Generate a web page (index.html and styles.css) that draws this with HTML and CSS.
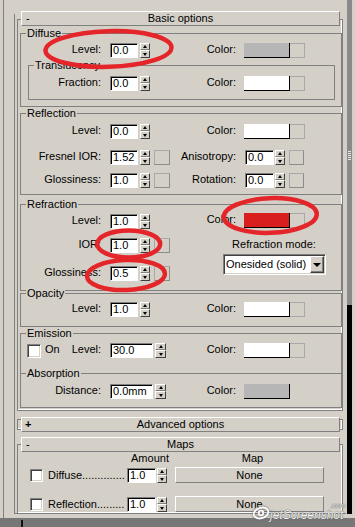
FILE: index.html
```html
<!DOCTYPE html>
<html lang="en">
<head>
<meta charset="utf-8">
<title>Material options</title>
<link rel="stylesheet" href="styles.css">
</head>
<body>
<div class="screen">
  <div class="main">
    <div class="edge"></div>
    <div class="pane">
      <section class="rollout basic">
        <div class="rhead"><span class="sign">-</span><span class="rtitle">Basic options</span></div>
        <div class="rbody">
          <div class="group diffuse">
            <div class="gtitle">Diffuse</div>
            <div class="row mt3">
              <div class="lcell"><span class="lbl">Level:</span><span class="num">0.0</span><span class="spin"><i></i><i></i></span></div>
              <div class="rcell"><span class="rlbl">Color:</span><span class="swatch s-gray"></span><span class="cbtn"></span></div>
            </div>
            <div class="group sub">
              <div class="gtitle">Translucency</div>
              <div class="row mt4">
                <div class="lcell"><span class="lbl">Fraction:</span><span class="num">0.0</span><span class="spin"><i></i><i></i></span></div>
                <div class="rcell"><span class="rlbl">Color:</span><span class="swatch s-white"></span><span class="cbtn"></span></div>
              </div>
            </div>
          </div>

          <div class="group reflection">
            <div class="gtitle">Reflection</div>
            <div class="row mt4">
              <div class="lcell"><span class="lbl">Level:</span><span class="num">0.0</span><span class="spin"><i></i><i></i></span></div>
              <div class="rcell"><span class="rlbl">Color:</span><span class="swatch s-white"></span><span class="cbtn"></span></div>
            </div>
            <div class="row mt11">
              <div class="lcell"><span class="lbl">Fresnel IOR:</span><span class="num">1.52</span><span class="spin"><i></i><i></i></span><span class="mbtn"></span></div>
              <div class="rcell"><span class="rlbl">Anisotropy:</span><span class="num">0.0</span><span class="spin"><i></i><i></i></span><span class="mbtn"></span></div>
            </div>
            <div class="row mt8">
              <div class="lcell"><span class="lbl">Glossiness:</span><span class="num">1.0</span><span class="spin"><i></i><i></i></span><span class="mbtn"></span></div>
              <div class="rcell"><span class="rlbl">Rotation:</span><span class="num">0.0</span><span class="spin"><i></i><i></i></span><span class="mbtn"></span></div>
            </div>
          </div>

          <div class="group refraction">
            <div class="gtitle">Refraction</div>
            <div class="cols">
              <div class="lcol">
                <div class="row mt3">
                  <div class="lcell"><span class="lbl">Level:</span><span class="num">1.0</span><span class="spin"><i></i><i></i></span></div>
                </div>
                <div class="row mt9">
                  <div class="lcell"><span class="lbl">IOR:</span><span class="num">1.0</span><span class="spin"><i></i><i></i></span><span class="mbtn"></span></div>
                </div>
                <div class="row mt13">
                  <div class="lcell"><span class="lbl">Glossiness:</span><span class="num">0.5</span><span class="spin"><i></i><i></i></span><span class="mbtn"></span></div>
                </div>
              </div>
              <div class="rcol">
                <div class="row mt2">
                  <div class="rcell"><span class="rlbl">Color:</span><span class="swatch s-red"></span><span class="cbtn"></span></div>
                </div>
                <div class="mode-lbl">Refraction mode:</div>
                <div class="select"><span class="sel-text">Onesided (solid)</span><span class="sel-btn"></span></div>
              </div>
            </div>
          </div>

          <div class="group opacity">
            <div class="gtitle">Opacity</div>
            <div class="row mt2">
              <div class="lcell"><span class="lbl">Level:</span><span class="num">1.0</span><span class="spin"><i></i><i></i></span></div>
              <div class="rcell"><span class="rlbl">Color:</span><span class="swatch s-white"></span><span class="cbtn"></span></div>
            </div>
          </div>

          <div class="group emission">
            <div class="gtitle">Emission</div>
            <div class="row mt3">
              <div class="lcell"><span class="lbl lbl-chk"><span class="chk"></span><span class="on">On</span><span class="lvl">Level:</span></span><span class="num wide">30.0</span><span class="spin wide"><i></i><i></i></span></div>
              <div class="rcell"><span class="rlbl">Color:</span><span class="swatch s-white"></span><span class="cbtn"></span></div>
            </div>
          </div>

          <div class="group absorption">
            <div class="gtitle">Absorption</div>
            <div class="row mt4">
              <div class="lcell"><span class="lbl">Distance:</span><span class="num wide">0.0mm</span><span class="spin wide"><i></i><i></i></span></div>
              <div class="rcell"><span class="rlbl">Color:</span><span class="swatch s-gray"></span></div>
            </div>
          </div>
        </div>
      </section>

      <section class="rollout advanced">
        <div class="rhead"><span class="sign plus">+</span><span class="rtitle">Advanced options</span></div>
        <div class="rbody"></div>
      </section>

      <section class="rollout maps">
        <div class="rhead"><span class="sign">-</span><span class="rtitle">Maps</span></div>
        <div class="rbody">
          <div class="mhead"><span class="amt">Amount</span><span class="maplbl">Map</span></div>
          <div class="mrow mt2">
            <span class="chk small"></span>
            <span class="mname">Diffuse..............</span>
            <span class="num mnum">1.0</span><span class="spin"><i></i><i></i></span>
            <span class="none">None</span>
          </div>
          <div class="mrow mt13">
            <span class="chk small"></span>
            <span class="mname">Reflection.........</span>
            <span class="num mnum">1.0</span><span class="spin"><i></i><i></i></span>
            <span class="none">None</span>
          </div>
        </div>
      </section>
    </div>
    <div class="scroll"><div class="thumb"><span class="grip"></span></div><div class="track"></div></div>
  </div>
  <div class="band"><span class="band-mark"></span></div>

  <svg class="marks" width="355" height="527" viewBox="0 0 355 527">
    <ellipse cx="108.5" cy="49" rx="63" ry="17.8" transform="rotate(-1.5 108.5 49)"/>
    <ellipse cx="270.3" cy="215.5" rx="46.5" ry="17.3" transform="rotate(-2 270.3 215.5)"/>
    <ellipse cx="128.7" cy="244" rx="31.5" ry="13.6"/>
    <ellipse cx="126" cy="275" rx="39" ry="15" transform="rotate(-2 126 275)"/>
  </svg>

  <div class="wm">
    <svg class="wm-logo" width="20" height="14" viewBox="0 0 20 14"><ellipse cx="10" cy="7" rx="7.5" ry="5.2" transform="rotate(-18 10 7)"/><circle cx="10" cy="7" r="2.3"/></svg>
    <span class="wm-text">jetScreenshot</span><span class="wm-com">.com</span>
  </div>
</div>
</body>
</html>
```

FILE: styles.css
```css
* { box-sizing: border-box; }
html, body { margin: 0; padding: 0; }
body {
  background: #d4d0c8;
  font: 11px/13px "Liberation Sans", Arial, sans-serif;
  color: #000;
}
.screen {
  position: relative;
  width: 355px;
  height: 527px;
  overflow: hidden;
  background: #d4d0c8;
  display: flex;
  flex-direction: column;
}
.main { display: flex; height: 518px; flex-shrink: 0; }
.edge { width: 4px; border-right: 1px solid #808080; }
.pane {
  width: 332px;
  height: 500px;
  margin: 14px 0 0 10px;
  border-left: 1px solid #808080;
  border-bottom: 1px solid #808080;
  display: flex;
  flex-direction: column;
}
.scroll { width: 5px; height: 514px; margin-left: 1px; display: flex; flex-direction: column; }
.thumb { height: 305px; background: #8a8a8a; display: flex; align-items: center; justify-content: center; }
.grip {
  width: 3px; height: 9px; margin-top: 5px;
  background: repeating-linear-gradient(to bottom, #e6e6e6 0 1px, transparent 1px 2px);
}
.track { flex: 1; background: #000; }
.band { flex: 1; background: #777; display: flex; }
.band-mark { width: 2px; margin-left: 21px; margin-top: 2px; background: #111; }

/* rollouts */
.rollout { margin: 0 3px 0 2px; flex-shrink: 0; }
.basic { margin-top: -3px; }
.advanced { margin-top: 6px; }
.maps { margin-top: 7px; flex: 1 1 auto; display: flex; flex-direction: column; }
.rhead {
  position: relative;
  z-index: 1;
  display: grid;
  height: 15px;
  margin: 0 3px 0 4px;
  background: #d4d0c8;
  border: 1px solid;
  border-color: #fff #808080 #808080 #fff;
  line-height: 12px;
}
.rhead > span { grid-area: 1 / 1; }
.sign { justify-self: start; padding-left: 4px; }
.sign.plus { font-weight: bold; padding-left: 3px; }
.rtitle { justify-self: center; }
.rbody { border: 1px solid #808080; box-shadow: inset -1px -1px 0 #fff; }
.basic .rbody { margin-top: -7px; padding: 13px 0 2px 2px; }
.advanced .rbody { margin-top: -13px; height: 11px; }
.maps .rbody { margin-top: -8px; flex: 1; border-bottom: 0; padding-top: 7px; }

/* groups */
.group { border: 1px solid #808080; }
.gtitle {
  margin: -7px 0 0 5px;
  padding: 0 1px;
  width: max-content;
  height: 13px;
  background: #d4d0c8;
}
.diffuse { padding-bottom: 6px; }
.sub { margin: 7px 6px 0 7px; padding-bottom: 8px; }
.reflection { margin-top: 6px; padding-bottom: 6px; }
.refraction { margin-top: 9px; padding-bottom: 9px; }
.opacity { margin-top: 2px; padding-bottom: 9px; }
.emission { margin-top: 6px; padding-bottom: 15px; border-bottom: 0; }
.absorption { padding-bottom: 8px; }

.mt2 { margin-top: 2px; }
.mt3 { margin-top: 3px; }
.mt4 { margin-top: 4px; }
.mt8 { margin-top: 8px; }
.mt9 { margin-top: 9px; }
.mt11 { margin-top: 11px; }
.mt13 { margin-top: 13px; }

.row { display: flex; height: 15px; }
.lcell { width: 149px; flex-shrink: 0; display: flex; align-items: flex-start; }
.rcell { display: flex; align-items: flex-start; }
.sub .lcell { width: 141px; }
.lbl { width: 80px; margin-right: 9px; text-align: right; white-space: nowrap; }
.sub .lbl { width: 72px; }
.rlbl { width: 66px; margin-right: 8px; text-align: right; white-space: nowrap; }
.lbl-chk { display: flex; text-align: left; }
.lbl-chk .chk { margin: 1px 0 0 6px; }
.on { margin-left: 4px; }
.lvl { margin-left: auto; }

.num {
  width: 28px;
  height: 15px;
  background: #fff;
  border: 1px solid;
  border-color: #808080 #fff #fff #808080;
  box-shadow: inset 1px 1px 0 #000;
  padding-left: 2px;
  line-height: 13px;
  white-space: nowrap;
  overflow: hidden;
}
.num.wide { width: 43px; }
.rcell .num { width: 29px; margin-left: 1px; }

.spin { display: flex; flex-direction: column; width: 10px; height: 15px; margin-left: 2px; }
.spin.wide { width: 11px; }
.rcell .spin { margin-left: 1px; }
.spin i {
  display: flex;
  align-items: center;
  justify-content: center;
  height: 7px;
  background: #d4d0c8;
  border: 1px solid;
  border-color: #fff #404040 #808080 #fff;
}
.spin i + i { height: 8px; border-bottom-color: #404040; }
.spin i::after {
  content: "";
  border-left: 2px solid transparent;
  border-right: 2px solid transparent;
}
.spin i:first-child::after { border-bottom: 3px solid #000; }
.spin i:last-child::after { border-top: 3px solid #000; }

.mbtn { width: 16px; height: 15px; margin-left: 4px; border: 1px solid; border-color: #a8a8a8 #8c8c8c #8c8c8c #a8a8a8; }
.rcell .mbtn { width: 15px; }

.swatch { width: 46px; height: 15px; border-right: 1px solid #000; border-bottom: 1px solid #000; }
.s-gray { background: #b6b6b6; }
.s-white { background: #fff; }
.s-red { background: #d91e1e; }
.cbtn { width: 15px; height: 15px; border: 1px solid #a8a8a8; border-left: 0; }

.chk {
  width: 14px;
  height: 14px;
  background: #fff;
  border: 1px solid;
  border-color: #808080 #fff #fff #808080;
  box-shadow: inset 1px 1px 0 #404040, inset -1px -1px 0 #d4d0c8;
  flex-shrink: 0;
}
.chk.small { width: 13px; height: 13px; margin-top: 2px; }

/* refraction columns */
.cols { display: flex; }
.lcol { width: 149px; flex-shrink: 0; }
.rcol { flex: 1; }
.mode-lbl { margin: 10px 0 0 53px; width: 102px; text-align: center; white-space: nowrap; }
.select {
  display: flex;
  margin: 3px 0 0 53px;
  width: 103px;
  height: 21px;
  padding: 1px;
  background: #fff;
  border: 1px solid;
  border-color: #808080 #fff #fff #808080;
  box-shadow: inset 1px 1px 0 #404040, inset -1px -1px 0 #d4d0c8;
}
.sel-text { flex: 1; padding-left: 1px; line-height: 17px; white-space: nowrap; overflow: hidden; }
.sel-btn {
  width: 14px;
  height: 17px;
  display: flex;
  align-items: center;
  justify-content: center;
  background: #d4d0c8;
  border: 1px solid;
  border-color: #fff #404040 #404040 #fff;
  box-shadow: inset -1px -1px 0 #808080;
}
.sel-btn::after {
  content: "";
  border-left: 4px solid transparent;
  border-right: 4px solid transparent;
  border-top: 4px solid #000;
}

/* maps */
.mhead { display: flex; height: 13px; }
.amt { margin-left: 109px; width: 46px; text-align: center; }
.maplbl { margin-left: 2px; width: 155px; text-align: center; }
.mrow { display: flex; align-items: flex-start; height: 16px; padding-left: 12px; }
.mname { width: 79px; margin-left: 5px; line-height: 16px; white-space: nowrap; }
.mnum { width: 29px; margin-top: 1px; }
.mrow .spin { margin: 1px 0 0 1px; }
.none {
  margin-left: 8px;
  width: 149px;
  height: 16px;
  border: 1px solid;
  border-color: #fff #808080 #808080 #fff;
  text-align: center;
  line-height: 14px;
}

/* annotation overlay */
.marks { position: absolute; left: 0; top: 0; pointer-events: none; }
.marks ellipse { fill: none; stroke: #e4252a; stroke-width: 4.5; }

.wm {
  position: absolute;
  left: 251px;
  top: 503px;
  display: flex;
  align-items: flex-end;
  color: rgba(255, 255, 255, 0.92);
  font-style: italic;
  text-shadow: 0 0 1px #555, 0 0 1px #555;
  pointer-events: none;
}
.wm-logo { margin-bottom: 1px; filter: drop-shadow(0 0 1px #555); }
.wm-logo ellipse, .wm-logo circle { fill: none; stroke: #fff; stroke-width: 1.8; }
.wm-text { font-size: 12px; line-height: 12px; margin-left: -1px; }
.wm-com { font-size: 7px; line-height: 6px; margin: 0 0 12px -13px; }
```
